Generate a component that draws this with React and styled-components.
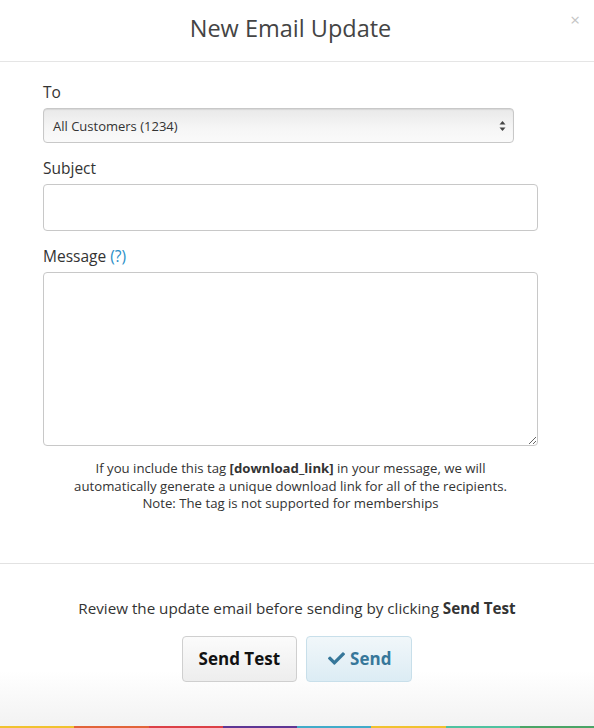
import React from 'react';
import styled, { createGlobalStyle } from 'styled-components';
import { FaCheck } from 'react-icons/fa';

const GlobalStyle = createGlobalStyle`
  html, body {
    margin: 0;
    padding: 0;
    background: #fff;
  }
  body {
    font-family: "Open Sans", Lato, sans-serif;
    color: #333;
  }
`;

const BAR_COLORS = ['#f0c230', '#e2643a', '#dc4147', '#5d3694', '#42abc9', '#f0c230', '#50c2a0', '#4aa466'];

const Modal = styled.div`
  position: relative;
  width: 594px;
  height: 728px;
  display: flex;
  flex-direction: column;
  overflow: hidden;
`;

const Header = styled.div`
  position: relative;
  height: 61px;
  display: flex;
  align-items: center;
  justify-content: center;
  padding: 0 56px 0 43px;
  border-bottom: 1px solid #e5e5e5;
`;

const Title = styled.h1`
  margin: 0 0 5px;
  font-size: 23.5px;
  font-weight: 400;
  color: #444;
`;

const Close = styled.span`
  position: absolute;
  top: 8px;
  right: 14px;
  font-size: 17px;
  color: #c4c4c4;
  cursor: pointer;
`;

const Body = styled.div`
  padding: 20px 56px 50px 43px;
  border-bottom: 1px solid #e2e2e2;
`;

const Field = styled.div`
  display: flex;
  flex-direction: column;
  margin-bottom: 15px;
`;

const Label = styled.label`
  font-size: 15.5px;
  line-height: 20px;
  color: #333;
  margin-bottom: 6px;
`;

const Help = styled.a`
  color: #2b8fc7;
  text-decoration: none;
`;

const SelectBox = styled.div`
  position: relative;
  width: 471px;
  height: 35px;
  box-sizing: border-box;
  display: flex;
  align-items: center;
  padding: 0 9px;
  font-size: 13px;
  color: #333;
  border: 1px solid #c8c8c8;
  border-radius: 4px;
  background: linear-gradient(#e9e9e9, #f6f6f6 60%, #fafafa);
  box-shadow: inset 0 1px 1px rgba(0, 0, 0, 0.08);
`;

const Arrows = styled.svg`
  position: absolute;
  right: 7px;
  top: 50%;
  transform: translateY(-50%);
`;

const TextInput = styled.input`
  width: 495px;
  height: 47px;
  box-sizing: border-box;
  border: 1px solid #c8c8c8;
  border-radius: 4px;
  padding: 0 10px;
  font: inherit;
  font-size: 14px;
  outline: none;
`;

const TextArea = styled.textarea`
  width: 495px;
  height: 174px;
  box-sizing: border-box;
  border: 1px solid #c8c8c8;
  border-radius: 4px;
  padding: 8px 10px;
  font: inherit;
  font-size: 14px;
  outline: none;
  resize: both;
  display: block;
`;

const Note = styled.p`
  margin: -1px 0 0;
  text-align: center;
  font-size: 13.2px;
  line-height: 17.5px;
  color: #333;
`;

const Footer = styled.div`
  flex: 1;
  display: flex;
  flex-direction: column;
  align-items: center;
  padding-top: 34px;
  background: linear-gradient(#fff 65%, #f2f2f2);
  position: relative;
`;

const Review = styled.p`
  margin: 0 0 18px;
  font-size: 15.2px;
  line-height: 20px;
  color: #333;
`;

const Buttons = styled.div`
  display: flex;
  gap: 9px;
`;

const Button = styled.button`
  height: 46px;
  box-sizing: border-box;
  padding: ${p => (p.primary ? '0 20px 0 21px' : '0 16px')};
  border-radius: 4px;
  font-family: inherit;
  font-size: 17px;
  font-weight: 700;
  display: flex;
  align-items: center;
  gap: 5px;
  cursor: pointer;
  border: 1px solid ${p => (p.primary ? '#c8dfea' : '#cfcfcf')};
  color: ${p => (p.primary ? '#36779a' : '#111')};
  background: ${p =>
    p.primary
      ? 'linear-gradient(#f1f7fa, #dcecf4)'
      : 'linear-gradient(#fbfbfb, #ededed)'};
`;

const ColorBar = styled.div`
  position: absolute;
  left: 0;
  right: 0;
  bottom: 0;
  height: 2px;
  display: flex;
`;

const Segment = styled.div`
  flex: 1;
  background: ${p => p.color};
`;

export default function App() {
  return (
    <>
      <GlobalStyle />
      <Modal>
        <Header>
          <Title>New Email Update</Title>
          <Close>×</Close>
        </Header>
        <Body>
          <Field>
            <Label>To</Label>
            <SelectBox>
              All Customers (1234)
              <Arrows width="7" height="11" viewBox="0 0 7 11">
                <path d="M3.5 0.5 L6.5 4 L0.5 4 Z" fill="#444" />
                <path d="M3.5 10.5 L6.5 7 L0.5 7 Z" fill="#444" />
              </Arrows>
            </SelectBox>
          </Field>
          <Field>
            <Label>Subject</Label>
            <TextInput type="text" />
          </Field>
          <Field>
            <Label>
              Message <Help href="#">(?)</Help>
            </Label>
            <TextArea />
          </Field>
          <Note>
            If you include this tag <b>[download_link]</b> in your message, we will
            <br />
            automatically generate a unique download link for all of the recipients.
            <br />
            Note: The tag is not supported for memberships
          </Note>
        </Body>
        <Footer>
          <Review>
            Review the update email before sending by clicking <b>Send Test</b>
          </Review>
          <Buttons>
            <Button>Send Test</Button>
            <Button primary>
              <FaCheck size={17} />
              Send
            </Button>
          </Buttons>
          <ColorBar>
            {BAR_COLORS.map((c, i) => (
              <Segment key={i} color={c} />
            ))}
          </ColorBar>
        </Footer>
      </Modal>
    </>
  );
}
